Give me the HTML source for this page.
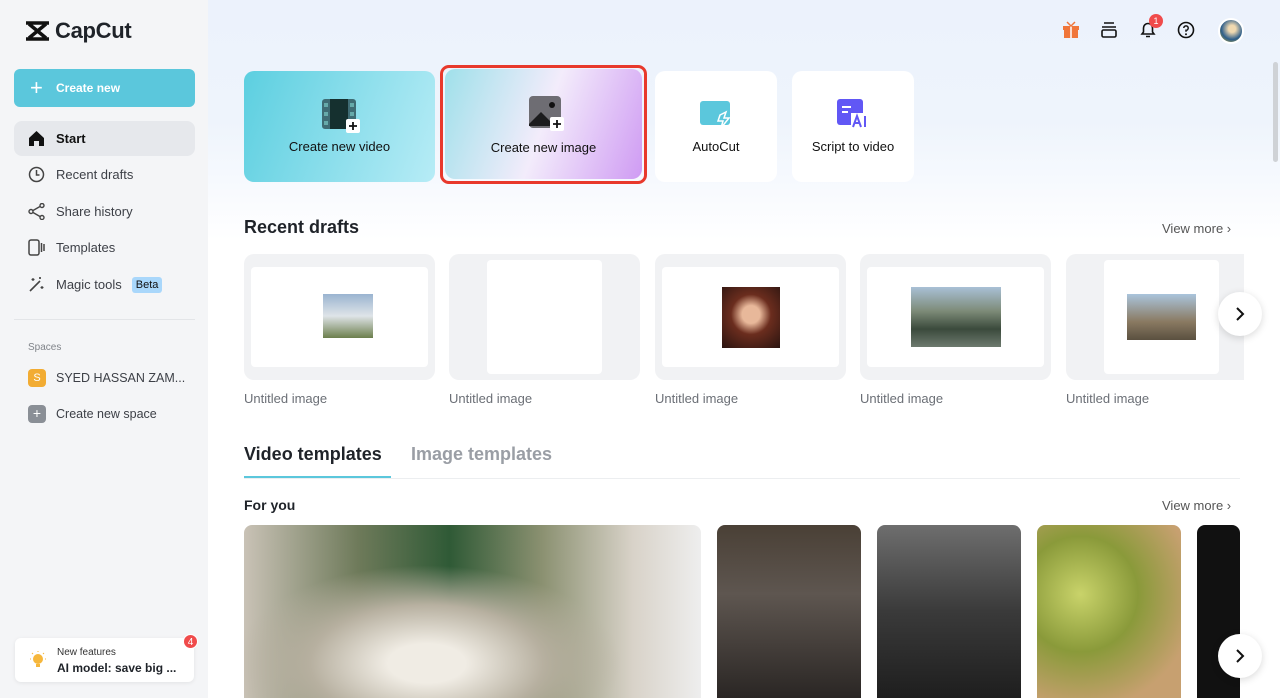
<!DOCTYPE html>
<html><head><meta charset="utf-8"><style>
*{box-sizing:border-box;margin:0;padding:0}
body{width:1280px;height:698px;overflow:hidden;font-family:"Liberation Sans",sans-serif;background:#fff;position:relative;color:#1f2329}
.sb{position:absolute;left:0;top:0;width:208px;height:698px;background:#f4f5f7}
.main{position:absolute;left:208px;top:0;right:0;height:698px;background:linear-gradient(180deg,#ecf2fc 0,#eef4fc 120px,#f6f9fe 180px,#fff 240px)}
.abs{position:absolute}
.nav{position:absolute;left:14px;width:181px;height:35px;border-radius:8px;font-size:13px;color:#3d4047;display:flex;align-items:center;padding-left:42px}
.nav svg{position:absolute;left:14px;top:9px}
.card{position:absolute;border-radius:10px;display:flex;flex-direction:column;align-items:center;justify-content:flex-end;font-size:13px;color:#111;padding-bottom:28px}
.dr{position:absolute;top:254px;width:191px;height:126px;background:#f1f2f4;border-radius:10px}
.dr .in{position:absolute;background:#fff;border-radius:4px}
.lbl{position:absolute;top:391px;font-size:13px;color:#6b6f76}
.tp{position:absolute;top:525px;height:173px;border-radius:8px 8px 0 0;overflow:hidden}
.arrow{position:absolute;width:44px;height:44px;border-radius:50%;background:#fff;box-shadow:0 2px 8px rgba(0,0,0,.15);display:flex;align-items:center;justify-content:center}
</style></head><body>
<div class="sb">
 <div class="abs" style="left:24px;top:18px;display:flex;align-items:center">
  <svg width="27" height="22" viewBox="0 0 27 22"><path d="M2 3h23M2 19h23M5 4l17 14M22 4L5 18" stroke="#111" stroke-width="3.5" fill="none"/></svg>
  <span style="font-size:22px;font-weight:bold;margin-left:4px;letter-spacing:-.3px">CapCut</span></div>
 <div class="abs" style="left:14px;top:69px;width:181px;height:38px;background:#5bc7dc;border-radius:6px;color:#fff;font-weight:bold;font-size:12px;display:flex;align-items:center;padding-left:42px">
  <span style="position:absolute;left:16px;top:6px;font-size:22px;font-weight:normal">+</span>Create new</div>
 <div class="nav" style="top:121px;background:#e6e8ec;color:#111;font-weight:bold"><svg width="17" height="17" viewBox="0 0 17 17"><path d="M1 8L8.5 1 16 8v8h-5v-5H6v5H1z" fill="#111"/></svg>Start</div>
 <div class="nav" style="top:157px"><svg width="17" height="17"><circle cx="8.5" cy="8.5" r="7" stroke="#444" stroke-width="1.5" fill="none"/><path d="M8.5 4v5h3" stroke="#444" stroke-width="1.5" fill="none"/></svg>Recent drafts</div>
 <div class="nav" style="top:194px"><svg width="17" height="17"><circle cx="3" cy="8.5" r="2" stroke="#444" fill="none" stroke-width="1.4"/><circle cx="14" cy="2.5" r="2" stroke="#444" fill="none" stroke-width="1.4"/><circle cx="14" cy="14.5" r="2" stroke="#444" fill="none" stroke-width="1.4"/><path d="M5 7.5l7-4M5 9.5l7 4" stroke="#444" stroke-width="1.4"/></svg>Share history</div>
 <div class="nav" style="top:230px"><svg width="17" height="17"><rect x="1" y="1" width="10" height="15" rx="2" stroke="#444" stroke-width="1.5" fill="none"/><path d="M13.5 4v9M16 5v7" stroke="#444" stroke-width="1.5"/></svg>Templates</div>
 <div class="nav" style="top:267px"><svg width="17" height="17"><path d="M2 15L12 5" stroke="#444" stroke-width="1.6"/><path d="M5 2v3M3.5 3.5h3M14 10v3M12.5 11.5h3M12 1v2M11 2h2" stroke="#444" stroke-width="1.2"/></svg>Magic tools<span style="margin-left:10px;background:#a9d7fb;color:#111;font-size:11px;padding:2px 4px;border-radius:3px">Beta</span></div>
 <div class="abs" style="left:14px;top:319px;width:181px;height:1px;background:#e3e5e8"></div>
 <div class="abs" style="left:28px;top:342px;font-size:10px;color:#80848a">Spaces</div>
 <div class="abs" style="left:28px;top:369px;width:18px;height:18px;background:#f2ac33;border-radius:4px;color:#fff;font-size:11px;text-align:center;line-height:18px">S</div>
 <div class="abs" style="left:56px;top:371px;font-size:12.5px;color:#3d4047">SYED HASSAN ZAM...</div>
 <div class="abs" style="left:28px;top:405px;width:18px;height:18px;background:#8a8f96;border-radius:4px;color:#fff;font-size:14px;text-align:center;line-height:17px">+</div>
 <div class="abs" style="left:56px;top:407px;font-size:12.5px;color:#3d4047">Create new space</div>
 <div class="abs" style="left:15px;top:638px;width:179px;height:44px;background:#fff;border-radius:6px;box-shadow:0 1px 4px rgba(0,0,0,.08)">
  <svg class="abs" style="left:14px;top:13px" width="18" height="18"><circle cx="9" cy="8" r="5" fill="#f6b73c"/><rect x="7" y="13" width="4" height="3" fill="#f6b73c"/><path d="M9 0v1M1 8h1M16 8h1M3 2l1 1M15 2l-1 1" stroke="#f6b73c"/></svg>
  <div class="abs" style="left:42px;top:9px;font-size:10px;color:#333">New features</div>
  <div class="abs" style="left:42px;top:23px;font-size:12px;font-weight:bold">AI model: save big ...</div>
  <div class="abs" style="left:168px;top:-4px;width:15px;height:15px;border-radius:50%;background:#f04b4b;color:#fff;font-size:10px;text-align:center;line-height:15px;border:1px solid #fff">4</div>
 </div>
</div>
<div class="main"></div>
<svg class="abs" style="left:1062px;top:21px" width="18" height="18"><rect x="1" y="5" width="16" height="4" fill="#f0763a"/><rect x="2" y="9" width="14" height="8" fill="#f0763a"/><path d="M9 5v12" stroke="#fff" stroke-width="1.5"/><path d="M5 1l4 4 4-4" stroke="#f0763a" stroke-width="1.5" fill="none"/></svg>
<svg class="abs" style="left:1100px;top:21px" width="18" height="18"><path d="M4 2h10M2 6h14" stroke="#111" stroke-width="1.6"/><rect x="2" y="9" width="14" height="7" rx="1.5" stroke="#111" stroke-width="1.6" fill="none"/></svg>
<svg class="abs" style="left:1139px;top:21px" width="18" height="18"><path d="M3 13h12l-1.5-2V7a4.5 4.5 0 0 0-9 0v4z M7 15.5h4" stroke="#111" stroke-width="1.6" fill="none"/></svg>
<div class="abs" style="left:1149px;top:14px;width:14px;height:14px;border-radius:50%;background:#f04b4b;color:#fff;font-size:9px;text-align:center;line-height:14px">1</div>
<svg class="abs" style="left:1177px;top:21px" width="18" height="18"><circle cx="9" cy="9" r="7.5" stroke="#111" stroke-width="1.6" fill="none"/><path d="M6.8 7a2.2 2.2 0 1 1 2.2 2.3v1.5" stroke="#111" stroke-width="1.5" fill="none"/><circle cx="9" cy="13.2" r="1" fill="#111"/></svg>
<div class="abs" style="left:1218px;top:18px;width:26px;height:26px;border-radius:50%;background:radial-gradient(circle at 55% 40%,#f0d9b0 20%,#2c5d8a 60%,#d6b52a);border:2px solid #fff"></div>
<div class="abs" style="left:1273px;top:62px;width:5px;height:100px;background:#cfd2d6;border-radius:3px"></div>
<div class="card" style="left:244px;top:71px;width:191px;height:111px;background:linear-gradient(110deg,#5ccfe0,#b7ecf6)">
 <svg class="abs" style="left:78px;top:28px" width="38" height="34"><rect x="0" y="0" width="34" height="30" rx="3" fill="#3f6c74"/><rect x="8" y="0" width="18" height="30" fill="#15302f"/><rect x="2" y="4" width="4" height="4" fill="#6aa"/><rect x="2" y="13" width="4" height="4" fill="#6aa"/><rect x="2" y="22" width="4" height="4" fill="#6aa"/><rect x="28" y="4" width="4" height="4" fill="#6aa"/><rect x="28" y="13" width="4" height="4" fill="#6aa"/><rect x="24" y="20" width="14" height="14" rx="2" fill="#fff"/><path d="M31 23v8M27 27h8" stroke="#111" stroke-width="1.8"/></svg>
 Create new video</div>
<div class="abs" style="left:440px;top:65px;width:207px;height:119px;border:3px solid #e8392c;border-radius:9px"></div>
<div class="card" style="left:445px;top:69px;width:197px;height:110px;background:linear-gradient(110deg,#9fe0ea,#f3ecfb 50%,#cf9bf3);padding-bottom:24px">
 <svg class="abs" style="left:84px;top:27px" width="36" height="36"><rect x="0" y="0" width="32" height="32" rx="4" fill="#6e6d73"/><circle cx="23" cy="9" r="3" fill="#111"/><path d="M0 28l12-12 14 14H0z" fill="#1c1c1e"/><rect x="21" y="21" width="14" height="14" rx="2" fill="#fff"/><path d="M28 24v8M24 28h8" stroke="#111" stroke-width="1.8"/></svg>
 Create new image</div>
<div class="card" style="left:655px;top:71px;width:122px;height:111px;background:#fff">
 <svg class="abs" style="left:45px;top:30px" width="34" height="28"><rect x="0" y="0" width="30" height="24" rx="3" fill="#5bc7dc"/><path d="M20 14l6-3-2 6h5l-8 10 2-7h-5z" fill="#5bc7dc" stroke="#fff" stroke-width="1.5"/></svg>
 AutoCut</div>
<div class="card" style="left:792px;top:71px;width:122px;height:111px;background:#fff">
 <svg class="abs" style="left:45px;top:28px" width="34" height="30"><rect x="0" y="0" width="26" height="26" rx="3" fill="#6157f5"/><path d="M5 8h9M5 13h6" stroke="#fff" stroke-width="2"/><rect x="14" y="14" width="20" height="16" fill="#fff"/><path d="M16 28l4-11 4 11M17.5 24h5M28 17v11" stroke="#6157f5" stroke-width="2" fill="none"/></svg>
 Script to video</div>
<div class="abs" style="left:244px;top:217px;font-size:18px;font-weight:bold">Recent drafts</div>
<div class="abs" style="left:1162px;top:221px;font-size:13px;color:#555">View more &#8250;</div>
<div class="dr" style="left:244px"><div class="in" style="left:7px;top:13px;width:177px;height:100px"></div><div class="abs" style="left:79px;top:40px;width:50px;height:44px;background:linear-gradient(#9ab4d0,#dfe4e8 50%,#6c7f4c)"></div></div>
<div class="dr" style="left:449px"><div class="in" style="left:38px;top:6px;width:115px;height:114px"></div></div>
<div class="dr" style="left:655px"><div class="in" style="left:7px;top:13px;width:177px;height:100px"></div><div class="abs" style="left:67px;top:33px;width:58px;height:61px;background:radial-gradient(circle at 50% 45%,#e8b89a 20%,#6b2d1e 45%,#2a1410)"></div></div>
<div class="dr" style="left:860px"><div class="in" style="left:7px;top:13px;width:177px;height:100px"></div><div class="abs" style="left:51px;top:33px;width:90px;height:60px;background:linear-gradient(#a9c0d6,#7d8b78 40%,#3b4a3c 70%,#6d7a6e)"></div></div>
<div class="dr" style="left:1066px;width:178px;border-radius:10px 0 0 10px"><div class="in" style="left:38px;top:6px;width:115px;height:114px"></div><div class="abs" style="left:61px;top:40px;width:69px;height:46px;background:linear-gradient(#aac4dc,#8a7a62 60%,#5a5040)"></div></div>
<div class="lbl" style="left:244px">Untitled image</div><div class="lbl" style="left:449px">Untitled image</div><div class="lbl" style="left:655px">Untitled image</div><div class="lbl" style="left:860px">Untitled image</div><div class="lbl" style="left:1066px">Untitled image</div>
<div class="arrow" style="left:1218px;top:292px"><svg width="10" height="14"><path d="M2 1l6 6-6 6" stroke="#111" stroke-width="2" fill="none"/></svg></div>
<div class="abs" style="left:244px;top:444px;font-size:18px;font-weight:bold">Video templates</div>
<div class="abs" style="left:411px;top:444px;font-size:18px;font-weight:bold;color:#9a9ea5">Image templates</div>
<div class="abs" style="left:244px;top:476px;width:147px;height:2px;background:#5bc7dc"></div>
<div class="abs" style="left:244px;top:478px;width:996px;height:1px;background:#eceef0"></div>
<div class="abs" style="left:244px;top:497px;font-size:14px;font-weight:bold">For you</div>
<div class="abs" style="left:1162px;top:498px;font-size:13px;color:#555">View more &#8250;</div>
<div class="tp" style="left:244px;width:457px;background:radial-gradient(ellipse at 40% 80%,#f0ece4 10%,#b7b0a0 30%,transparent 50%),linear-gradient(90deg,#c9c2b6 0%,#6e7a5a 25%,#2f5a36 45%,#8a9070 65%,#d8d2c8 85%,#eee)"></div>
<div class="tp" style="left:717px;width:144px;background:linear-gradient(#4a4036,#5e5650 40%,#2a2624)"></div>
<div class="tp" style="left:877px;width:144px;background:linear-gradient(#6e6e6e,#3a3a3a 50%,#1e1e1e)"></div>
<div class="tp" style="left:1037px;width:144px;background:radial-gradient(circle at 30% 40%,#c9d36a,#8a9a3a 40%,#c7a070 80%)"></div>
<div class="tp" style="left:1197px;width:43px;background:#111"></div>
<div class="arrow" style="left:1218px;top:634px"><svg width="10" height="14"><path d="M2 1l6 6-6 6" stroke="#111" stroke-width="2" fill="none"/></svg></div>
</body></html>
